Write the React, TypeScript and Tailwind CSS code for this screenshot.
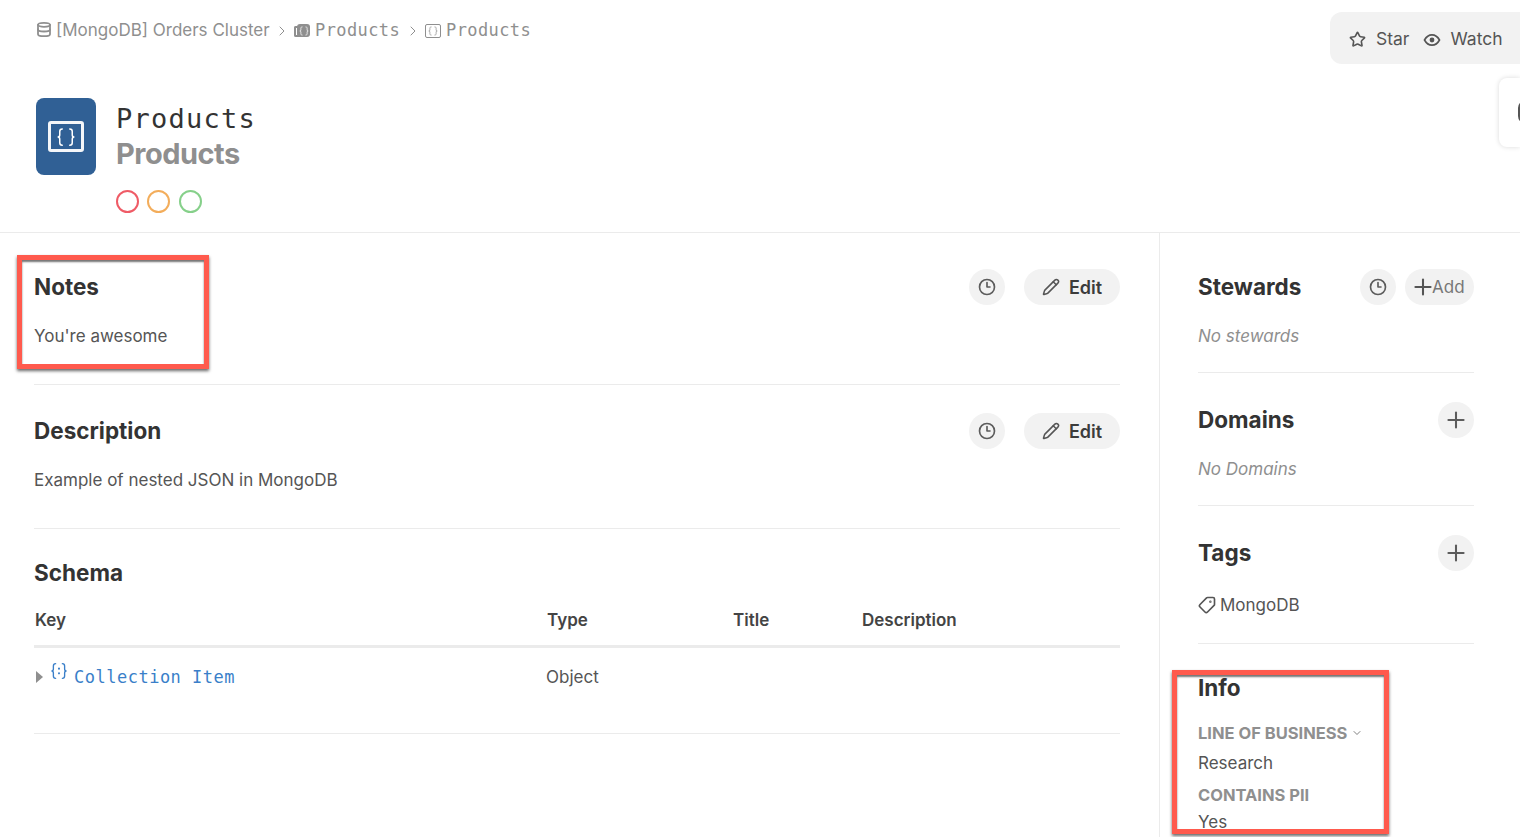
import React from "react";
import { ChevronDown, ChevronRight, Clock3, Database, Pencil, Plus, Star, Tag } from "lucide-react";

const SANS = "font-['Inter','Liberation_Sans',sans-serif]";
const MONO = "font-['DejaVu_Sans_Mono',monospace]";

const Braces = ({ className = "", dots = false, width = 1.2 }: { className?: string; dots?: boolean; width?: number }) => (
  <svg viewBox="0 0 16 16" className={className} fill="none" stroke="currentColor" strokeWidth={width} strokeLinecap="round">
    <path d="M5 1.500C3.300 1.500 3 2.400 3 3.500v2.800c0 1-.6 1.700-1.700 1.700C2.400 8 3 8.700 3 9.700v2.800c0 1.100.3 2 2 2" />
    <path d="M11 1.500c1.700 0 2 .9 2 2v2.800c0 1 .6 1.700 1.700 1.700-1.100 0-1.700.7-1.700 1.700v2.800c0 1.100-.3 2-2 2" />
    {dots && <path d="M8 5.800v.1M8 10v.1" strokeWidth={width * 1.5} />}
  </svg>
);

const Eye = () => (
  <svg viewBox="0 0 24 24" className="h-[18px] w-[18px]" fill="none" stroke="currentColor" strokeWidth="2.200">
    <path d="M2 12c2.400-4.400 5.800-6.800 10-6.800S19.600 7.600 22 12c-2.400 4.400-5.800 6.800-10 6.800S4.400 16.400 2 12Z" />
    <circle cx="12" cy="12" r="3.200" fill="currentColor" stroke="none" />
  </svg>
);

const RoundIcon = ({ children }: { children: React.ReactNode }) => (
  <button className="flex h-9 w-9 items-center justify-center rounded-full bg-[#f2f2f2] text-[#5c5c5c]">{children}</button>
);

const EditButton = () => (
  <button className="ml-[19px] flex h-9 w-24 items-center justify-center gap-[9px] rounded-full bg-[#f2f2f2] text-[18px] font-semibold text-[#3c3c3c]">
    <Pencil className="h-[18px] w-[18px] text-[#555555]" strokeWidth={2} />
    Edit
  </button>
);

const Heading = ({ children }: { children: React.ReactNode }) => (
  <h2 className="text-[22.500px] leading-9 font-bold text-[#333333]">{children}</h2>
);

const MainHead = ({ title }: { title: string }) => (
  <div className="flex h-9 items-center justify-between">
    <Heading>{title}</Heading>
    <div className="flex items-center">
      <RoundIcon><Clock3 className="h-[18px] w-[18px]" strokeWidth={2.200} /></RoundIcon>
      <EditButton />
    </div>
  </div>
);

const SideHead = ({ title }: { title: string }) => (
  <div className="flex h-9 items-center justify-between">
    <Heading>{title}</Heading>
    <RoundIcon><Plus className="h-[26px] w-[26px]" strokeWidth={1.9} /></RoundIcon>
  </div>
);

const Callout = ({ className }: { className: string }) => (
  <div className={`pointer-events-none absolute border-[5px] border-[#ff5a4d] shadow-[0_2px_3px_rgba(0,0,0,0.6),inset_0_2px_2px_rgba(0,0,0,0.55)] ${className}`} />
);

export default function App() {
  return (
    <div className={`relative h-[837px] w-[1520px] overflow-hidden bg-white text-[#555555] ${SANS}`}>
      <header className="relative h-[233px] border-b border-[#ebebeb] pl-9">
        <div className="flex items-start justify-between">
          <nav className="mt-[18px] flex h-6 items-center pt-px text-[#8f8f8f]">
            <Database className="mt-[-2px] h-[17px] w-[16px]" strokeWidth={2.700} />
            <span className="ml-[4px] w-[214px] text-[17px] whitespace-nowrap">[MongoDB] Orders Cluster</span>
            <ChevronRight className="mx-[4px] h-4 w-4" strokeWidth={1.500} />
            <span className="relative flex h-[14px] w-[16px] items-center justify-end">
              <span className="absolute top-[2px] left-0 h-[11px] w-[6px] rounded-l-[2px] border-2 border-r-0 border-[#8f8f8f]" />
              <span className="flex h-[13px] w-[13px] items-center justify-center rounded-[3px] bg-[#8f8f8f] text-white"><Braces className="h-[10px] w-[10px]" /></span>
            </span>
            <span className={`ml-[5px] w-[86px] text-[17px] tracking-[0.400px] whitespace-nowrap ${MONO}`}>Products</span>
            <ChevronRight className="mx-[4px] h-4 w-4" strokeWidth={1.500} />
            <span className="flex h-[14px] w-4 items-center justify-center rounded-[2px] border-[1.500px] border-[#8f8f8f]"><Braces className="h-[10px] w-[10px]" /></span>
            <span className={`ml-[5px] text-[17px] tracking-[0.400px] whitespace-nowrap ${MONO}`}>Products</span>
          </nav>
          <div className="mt-3 flex h-[52px] w-[190px] items-center gap-[14px] rounded-l-xl bg-[#f2f2f2] pt-[3px] pl-[19px] text-[17.500px] text-[#555555]">
            <span className="flex items-center gap-[10px]"><Star className="h-[17px] w-[17px]" strokeWidth={2.300} />Star</span>
            <span className="flex items-center gap-[9px]"><Eye />Watch</span>
          </div>
        </div>
        <div className="mt-[34px] flex gap-5">
          <div className="flex h-[77px] w-[60px] items-center justify-center rounded-lg bg-[#306095]">
            <span className="flex h-[31px] w-[36px] items-center justify-center rounded-[3px] border-[3px] border-[#f4f6f9] text-white">
              <Braces className="h-[20px] w-[20px]" />
            </span>
          </div>
          <div>
            <div className={`h-9 text-[27px] leading-[41px] font-light tracking-[1.250px] text-[#333333] ${MONO}`}>Products</div>
            <div className="mt-[2px] text-[29px] leading-9 font-bold tracking-[-0.500px] text-[#8f8f8f]">Products</div>
            <div className="mt-[18px] flex">
              <span className="h-[23px] w-[23px] rounded-full border-2 border-[#ef5b66]" />
              <span className="ml-[8px] h-[23px] w-[23px] rounded-full border-2 border-[#f3ad5b]" />
              <span className="ml-[9px] h-[23px] w-[23px] rounded-full border-2 border-[#86d08a]" />
            </div>
          </div>
        </div>
        <div className="absolute top-[78px] right-0 h-[69px] w-[21px] overflow-hidden rounded-l-lg bg-white shadow-[0_0_5px_rgba(0,0,0,0.15)]">
          <div className="mt-[22px] ml-[19px] h-6 w-4 rounded-full border-2 border-[#555555]" />
        </div>
      </header>

      <div className="flex h-[604px]">
        <main className="w-[1160px] border-r border-[#ebebeb] pr-[39px] pl-[34px]">
          <section className="h-[152px] border-b border-[#ebebeb] pt-9">
            <MainHead title="Notes" />
            <p className="mt-[19px] text-[17px] leading-6">You're awesome</p>
          </section>
          <section className="h-[144px] border-b border-[#ebebeb] pt-7">
            <MainHead title="Description" />
            <p className="mt-[19px] text-[17px] leading-6">Example of nested JSON in MongoDB</p>
          </section>
          <section className="pt-[26px]">
            <Heading>Schema</Heading>
            <div className="mt-[16px] grid h-[41px] grid-cols-[512px_186px_129px_1fr] border-b-[3px] border-[#ebebeb] pl-px text-[17px] leading-[26px] font-semibold text-[#444444]">
              <span>Key</span><span>Type</span><span>Title</span><span>Description</span>
            </div>
            <div className="grid h-[86px] grid-cols-[512px_1fr] items-start border-b border-[#ebebeb] pt-[17px] text-[17px] leading-6">
              <div className="flex items-start pl-[2px]">
                <span className="mt-[6px] h-0 w-0 border-y-[6px] border-l-[7px] border-y-transparent border-l-[#8f8f8f]" />
                <Braces className="mt-[-3px] ml-[7px] h-[18px] w-[18px] text-[#3a7fc9]" dots />
                <span className={`ml-[6px] text-[17px] tracking-[0.500px] text-[#3a7fc9] ${MONO}`}>Collection Item</span>
              </div>
              <span>Object</span>
            </div>
          </section>
        </main>

        <aside className="w-[314px] pl-[38px]">
          <section className="h-[140px] border-b border-[#ebebeb] pt-9">
            <div className="flex h-9 items-center justify-between">
              <Heading>Stewards</Heading>
              <div className="flex items-center gap-[9px]">
                <RoundIcon><Clock3 className="h-[18px] w-[18px]" strokeWidth={2.200} /></RoundIcon>
                <button className="flex h-9 w-[69px] items-center justify-start rounded-full bg-[#f2f2f2] pl-[5px] text-[17px] text-[#777777]">
                  <Plus className="h-[26px] w-[26px] text-[#555555]" strokeWidth={1.900} />
                  <span className="ml-[-4px] pt-px">Add</span>
                </button>
              </div>
            </div>
            <p className="mt-[19px] text-[17px] leading-6 text-[#8f8f8f] italic">No stewards</p>
          </section>
          <section className="h-[133px] border-b border-[#ebebeb] pt-[29px]">
            <SideHead title="Domains" />
            <p className="mt-[19px] text-[17px] leading-6 text-[#8f8f8f] italic">No Domains</p>
          </section>
          <section className="h-[138px] border-b border-[#ebebeb] pt-[29px]">
            <SideHead title="Tags" />
            <div className="mt-[22px] flex items-center gap-[4px] text-[17px] leading-6">
              <Tag className="h-[18px] w-[18px] -scale-x-100" strokeWidth={2.200} />MongoDB
            </div>
          </section>
          <section className="pt-[26px]">
            <Heading>Info</Heading>
            <div className="mt-[17px] flex h-5 items-center gap-[4px] text-[16.500px] leading-5 font-bold text-[#8f8f8f]">
              LINE OF BUSINESS <ChevronDown className="h-3 w-3 text-[#555555]" strokeWidth={1.500} />
            </div>
            <p className="mt-2 text-[17px] leading-6">Research</p>
            <div className="mt-[10px] text-[16.500px] leading-5 font-bold text-[#8f8f8f]">CONTAINS PII</div>
            <p className="mt-[5px] text-[17px] leading-6">Yes</p>
          </section>
        </aside>
      </div>

      <Callout className="top-[255px] left-[17px] h-[114px] w-[192px]" />
      <Callout className="top-[670px] left-[1172px] h-[164px] w-[217px]" />
    </div>
  );
}
